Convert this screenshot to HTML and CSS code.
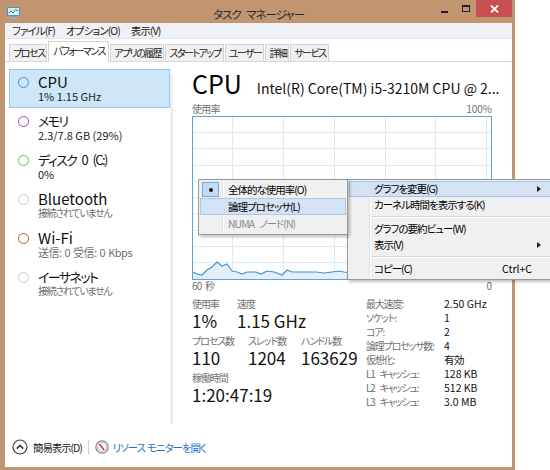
FILE: index.html
```html
<!DOCTYPE html>
<html lang="ja">
<head>
<meta charset="utf-8">
<title>タスク マネージャー</title>
<link rel="stylesheet" href="styles.css">
</head>
<body>
<div class="window">
  <div class="titlebar">
    <div class="tb-left">
      <svg class="app-icon" width="13" height="12" viewBox="0 0 13 12">
        <rect x="0.5" y="0.5" width="12" height="8" fill="#d6ebf8" stroke="#5f8fb4"/>
        <polyline points="1.5,6 4,4 6,6 8.5,2.5 11.5,4" fill="none" stroke="#3c9a3c" stroke-width="1"/>
        <rect x="4" y="9" width="5" height="1.5" fill="#7a9cb8"/>
        <rect x="2.5" y="10.5" width="8" height="1.5" fill="#9cb5c9"/>
      </svg>
    </div>
    <div class="title">タスク マネージャー</div>
    <div class="controls">
      <span class="btn-min"></span>
      <span class="btn-max"></span>
      <span class="btn-close">
        <svg width="9" height="8" viewBox="0 0 9 8"><path d="M1 0.5 L8 7.5 M8 0.5 L1 7.5" stroke="#fff" stroke-width="1.8"/></svg>
      </span>
    </div>
  </div>
  <div class="client">
    <div class="menubar">
      <span>ファイル(F)</span>
      <span>オプション(O)</span>
      <span>表示(V)</span>
    </div>
    <div class="tabs">
      <span class="tab">プロセス</span>
      <span class="tab active">パフォーマンス</span>
      <span class="tab">アプリの履歴</span>
      <span class="tab">スタートアップ</span>
      <span class="tab">ユーザー</span>
      <span class="tab">詳細</span>
      <span class="tab">サービス</span>
    </div>
    <div class="panel">
      <div class="sidebar">
        <div class="res selected">
          <span class="ring ring-cpu"></span>
          <div class="res-text"><div class="res-name">CPU</div><div class="res-sub">1% 1.15 GHz</div></div>
        </div>
        <div class="res">
          <span class="ring ring-mem"></span>
          <div class="res-text"><div class="res-name ja">メモリ</div><div class="res-sub">2.3/7.8 GB (29%)</div></div>
        </div>
        <div class="res">
          <span class="ring ring-disk"></span>
          <div class="res-text"><div class="res-name ja">ディスク 0 (C:)</div><div class="res-sub">0%</div></div>
        </div>
        <div class="res">
          <span class="ring ring-off"></span>
          <div class="res-text"><div class="res-name">Bluetooth</div><div class="res-sub muted ja">接続されていません</div></div>
        </div>
        <div class="res">
          <span class="ring ring-wifi"></span>
          <div class="res-text"><div class="res-name">Wi-Fi</div><div class="res-sub muted mixed">送信: 0 受信: 0 Kbps</div></div>
        </div>
        <div class="res">
          <span class="ring ring-off"></span>
          <div class="res-text"><div class="res-name ja">イーサネット</div><div class="res-sub muted ja">接続されていません</div></div>
        </div>
      </div>
      <div class="divider"></div>
      <div class="main">
        <div class="head">
          <span class="head-title">CPU</span>
          <span class="head-model">Intel(R) Core(TM) i5-3210M CPU @ 2...</span>
        </div>
        <div class="axis-top"><span class="ja-s">使用率</span><span>100%</span></div>
        <svg class="graph" width="300" height="164" viewBox="0 0 300 164">
          <rect x="0" y="0" width="300" height="164" fill="#fff"/>
          <g stroke="#dbeaf6" stroke-width="1">
            <line x1="1" y1="16.5" x2="299" y2="16.5"/>
            <line x1="1" y1="32.5" x2="299" y2="32.5"/>
            <line x1="1" y1="49.5" x2="299" y2="49.5"/>
            <line x1="1" y1="65.5" x2="299" y2="65.5"/>
            <line x1="1" y1="81.5" x2="299" y2="81.5"/>
            <line x1="1" y1="97.5" x2="299" y2="97.5"/>
            <line x1="1" y1="114.5" x2="299" y2="114.5"/>
            <line x1="1" y1="130.5" x2="299" y2="130.5"/>
            <line x1="1" y1="146.5" x2="299" y2="146.5"/>
            <line x1="40.5" y1="1" x2="40.5" y2="163"/>
            <line x1="91.5" y1="1" x2="91.5" y2="163"/>
            <line x1="142.5" y1="1" x2="142.5" y2="163"/>
            <line x1="193.5" y1="1" x2="193.5" y2="163"/>
            <line x1="243.5" y1="1" x2="243.5" y2="163"/>
            <line x1="294.5" y1="1" x2="294.5" y2="163"/>
          </g>
          <polygon fill="#e3eff9" points="1,156 5,158 10,159 15,154 20,151 25,146 30,150 35,148 40,155 45,156 50,158 55,156 64,156 69,158 75,155 82,156 90,159 95,154 100,156 110,156 117,156 124,156 132,157 140,156 147,155 152,156 160,157 170,156 180,158 190,156 200,157 210,155 220,157 230,156 240,158 250,156 260,157 270,155 280,157 290,156 299,157 299,163 1,163"/>
          <polyline fill="none" stroke="#3d95d2" stroke-width="1.2" points="1,156 5,158 10,159 15,154 20,151 25,146 30,150 35,148 40,155 45,156 50,158 55,156 64,156 69,158 75,155 82,156 90,159 95,154 100,156 110,156 117,156 124,156 132,157 140,156 147,155 152,156 160,157 170,156 180,158 190,156 200,157 210,155 220,157 230,156 240,158 250,156 260,157 270,155 280,157 290,156 299,157"/>
          <rect x="0.5" y="0.5" width="299" height="163" fill="none" stroke="#5ea2d6"/>
        </svg>
        <div class="axis-bottom"><span class="ja-s">60 秒</span><span>0</span></div>
        <div class="stats">
          <div class="stats-left">
            <div class="stat-group">
              <div class="stat w45"><div class="stat-label">使用率</div><div class="stat-value">1%</div></div>
              <div class="stat"><div class="stat-label">速度</div><div class="stat-value">1.15 GHz</div></div>
            </div>
            <div class="stat-group">
              <div class="stat w56"><div class="stat-label">プロセス数</div><div class="stat-value">110</div></div>
              <div class="stat w53"><div class="stat-label">スレッド数</div><div class="stat-value">1204</div></div>
              <div class="stat"><div class="stat-label">ハンドル数</div><div class="stat-value">163629</div></div>
            </div>
            <div class="stat-group">
              <div class="stat"><div class="stat-label">稼働時間</div><div class="stat-value">1:20:47:19</div></div>
            </div>
          </div>
          <div class="stats-right">
            <span class="k">最大速度:</span><span class="v">2.50 GHz</span>
            <span class="k">ソケット:</span><span class="v">1</span>
            <span class="k">コア:</span><span class="v">2</span>
            <span class="k">論理プロセッサ数:</span><span class="v">4</span>
            <span class="k">仮想化:</span><span class="v ja-v">有効</span>
            <span class="k">L1 キャッシュ:</span><span class="v">128 KB</span>
            <span class="k">L2 キャッシュ:</span><span class="v">512 KB</span>
            <span class="k">L3 キャッシュ:</span><span class="v">3.0 MB</span>
          </div>
        </div>
      </div>
    </div>
    <div class="footer">
      <svg class="fold-icon" width="16" height="16" viewBox="0 0 16 16">
        <circle cx="8" cy="8" r="7" fill="#fff" stroke="#444" stroke-width="1.2"/>
        <path d="M4.8 9.6 L8 6.4 L11.2 9.6" fill="none" stroke="#333" stroke-width="1.6"/>
      </svg>
      <span class="fold-text">簡易表示(D)</span>
      <span class="foot-sep"></span>
      <svg class="resmon-icon" width="14" height="14" viewBox="0 0 14 14">
        <circle cx="7" cy="7" r="6.2" fill="#e9e9e9" stroke="#8a8a8a" stroke-width="1.2"/>
        <circle cx="7" cy="7" r="4.2" fill="#fff" stroke="#b8b8b8" stroke-width="0.8"/>
        <path d="M4.5 4 L9 10" stroke="#d23a2a" stroke-width="1.6"/>
      </svg>
      <span class="resmon-link">リソース モニターを開く</span>
    </div>
  </div>
</div>

<div class="menu submenu">
  <div class="mi checked"><span class="check"><span class="bullet"></span></span><span class="mi-text">全体的な使用率(O)</span></div>
  <div class="mi hl"><span class="check"></span><span class="mi-text">論理プロセッサ(L)</span></div>
  <div class="mi disabled"><span class="check"></span><span class="mi-text">NUMA ノード(N)</span></div>
</div>

<div class="menu mainmenu">
  <div class="mi hl"><span class="mi-text">グラフを変更(G)</span><span class="arrow"></span></div>
  <div class="mi"><span class="mi-text">カーネル時間を表示する(K)</span></div>
  <div class="msep"></div>
  <div class="mi"><span class="mi-text">グラフの要約ビュー(W)</span></div>
  <div class="mi"><span class="mi-text">表示(V)</span><span class="arrow"></span></div>
  <div class="msep"></div>
  <div class="mi"><span class="mi-text">コピー(C)</span><span class="shortcut">Ctrl+C</span></div>
</div>
</body>
</html>
```

FILE: styles.css
```css
html, body {
  margin: 0;
  padding: 0;
  overflow: hidden;
  background: #ffffff;
}

body {
  width: 550px;
  height: 470px;
  position: relative;
  font-family: "Noto Sans CJK JP", "Noto Sans", sans-serif;
  font-feature-settings: "palt";
  color: #000;
}

.window {
  width: 515px;
  height: 470px;
  box-sizing: border-box;
  background: #c1956f;
  padding: 0 3px 3px 5px;
  display: flex;
  flex-direction: column;
}

/* title bar */
.titlebar {
  height: 23px;
  flex: none;
  display: grid;
  grid-template-columns: 1fr auto 1fr;
}

.tb-left {
  display: flex;
  align-items: flex-start;
}

.app-icon {
  margin: 7px 0 0 2px;
  display: block;
}

.title {
  font-size: 11.5px;
  line-height: 16px;
  padding-top: 6px;
  color: #2a2a2a;
  letter-spacing: -1px;
  word-spacing: 4px;
}

.controls {
  justify-self: end;
  display: flex;
  align-items: flex-start;
}

.btn-min {
  width: 7px;
  height: 2px;
  background: #222;
  margin-top: 11px;
}

.btn-max {
  width: 6px;
  height: 4px;
  border: 1px solid #222;
  border-top-width: 2px;
  margin: 5px 0 0 14px;
}

.btn-close {
  width: 36px;
  height: 17px;
  margin-left: 6px;
  background: #c84f4f;
  display: flex;
  align-items: center;
  justify-content: center;
}

.btn-close svg {
  display: block;
}

/* client area */
.client {
  flex: 1;
  background: #ffffff;
  display: flex;
  flex-direction: column;
  min-height: 0;
}

.menubar {
  height: 15px;
  flex: none;
  background: #eef2f7;
  border-bottom: 1px solid #dfe4ea;
  display: flex;
  gap: 11px;
  padding-left: 7px;
  font-size: 10.5px;
  line-height: 16px;
  letter-spacing: -0.9px;
  color: #1a1a1a;
}

.tabs {
  flex: none;
  height: 22px;
  display: flex;
  align-items: flex-end;
  padding-left: 4px;
  border-bottom: 1px solid #d9d9d9;
}

.tab {
  height: 17px;
  box-sizing: border-box;
  padding: 0 2px 0 3px;
  margin-right: 1px;
  background: #f0f0f0;
  border: 1px solid #d2d2d2;
  border-bottom: none;
  font-size: 10px;
  line-height: 16px;
  color: #1a1a1a;
  letter-spacing: -1.5px;
}

.tab.active {
  height: 21px;
  background: #ffffff;
  margin-bottom: -1px;
  line-height: 18px;
  padding: 0 3px 0 4px;
}

/* panel */
.panel {
  flex: 1;
  display: flex;
  min-height: 0;
}

.sidebar {
  width: 165px;
  flex: none;
  padding: 7px 0 0 4px;
  box-sizing: border-box;
}

.res {
  width: 161px;
  height: 39px;
  box-sizing: border-box;
  border: 1px solid transparent;
  display: flex;
  padding-left: 8px;
}

.res.selected {
  background: #cde7f8;
  border-color: #92c7ec;
}

.ring {
  width: 11px;
  height: 11px;
  box-sizing: border-box;
  border-radius: 50%;
  border: 1.5px solid #ccc;
  background: #fff;
  margin-top: 7px;
  flex: none;
}

.res.selected .ring {
  background: transparent;
}

.ring-cpu { border-color: #3f93cf; }
.ring-mem { border-color: #a743c6; }
.ring-disk { border-color: #6cbf35; }
.ring-off { border-color: #c9c9c9; }
.ring-wifi { border-color: #a6652a; }

.res-text {
  margin-left: 9px;
  padding-top: 5px;
}

.res-name {
  font-size: 15px;
  line-height: 14px;
  color: #111;
}

.res-name.ja {
  font-size: 13px;
  letter-spacing: -1.6px;
  word-spacing: 4px;
}

.res-sub {
  font-size: 11px;
  line-height: 12px;
  color: #222;
  margin-top: 1px;
}

.res-sub.ja {
  font-size: 10px;
  letter-spacing: -1.3px;
}

.res-sub.mixed {
  letter-spacing: -0.5px;
  word-spacing: 1px;
}

.res-sub.muted {
  color: #707070;
}

.divider {
  width: 3px;
  flex: none;
  background: #ededed;
  margin: 13px 0 8px 0;
}

.main {
  width: 300px;
  padding: 6px 20px 0 19px;
  flex: none;
}

.head {
  display: flex;
  align-items: baseline;
  height: 30px;
  line-height: 30px;
  white-space: nowrap;
}

.head-title {
  font-size: 25px;
  color: #000;
}

.head-model {
  font-size: 14px;
  margin-left: 15px;
  color: #111;
}

.axis-top, .axis-bottom {
  display: flex;
  justify-content: space-between;
  font-size: 10px;
  line-height: 12px;
  color: #707070;
}

.ja-s {
  letter-spacing: -0.8px;
  word-spacing: 2px;
}

.axis-top {
  margin-top: 5px;
}

.graph {
  display: block;
  margin-top: 1px;
}

.stats {
  display: flex;
  margin-top: 5px;
}

.stats-left {
  width: 174px;
  flex: none;
}

.stat-group {
  display: flex;
  margin-bottom: 3px;
}

.w45 { width: 45px; }
.w56 { width: 56px; }
.w53 { width: 53px; }

.stat-label {
  font-size: 10px;
  line-height: 14px;
  color: #6f6f6f;
  letter-spacing: -1.1px;
  white-space: nowrap;
}

.stat-value {
  font-size: 17px;
  line-height: 20px;
  color: #111;
  white-space: nowrap;
}

.stats-right {
  display: grid;
  grid-template-columns: 78px auto;
  font-size: 10.5px;
  line-height: 14px;
}

.stats-right .k {
  color: #6f6f6f;
  white-space: nowrap;
  font-size: 10px;
  letter-spacing: -1.2px;
  word-spacing: 4px;
}

.stats-right .v {
  color: #111;
  white-space: nowrap;
}

.stats-right .ja-v {
  letter-spacing: -0.6px;
}

/* footer */
.footer {
  height: 30px;
  flex: none;
  display: flex;
  align-items: center;
  padding: 0 0 5px 7px;
  font-size: 10.5px;
  letter-spacing: -1.1px;
  word-spacing: 1px;
}

.fold-icon {
  display: block;
}

.fold-text {
  margin-left: 5px;
  color: #1a1a1a;
}

.foot-sep {
  width: 1px;
  height: 15px;
  background: #d4d4d4;
  margin: 0 6px 0 6px;
}

.resmon-icon {
  display: block;
}

.resmon-link {
  margin-left: 4px;
  color: #1f6fc7;
}

/* context menus */
.menu {
  position: absolute;
  top: 179px;
  background: #f0f0f0;
  border: 1px solid #979797;
  box-sizing: border-box;
  box-shadow: 2px 2px 3px rgba(0, 0, 0, 0.25);
  font-size: 10.5px;
  letter-spacing: -1px;
  word-spacing: 4px;
  color: #000;
  padding: 1px 1px 2px 1px;
}

.submenu {
  left: 198px;
  width: 150px;
  z-index: 3;
  background-image: linear-gradient(to right, transparent 23px, #e2e2e2 23px, #e2e2e2 24px, #ffffff 24px, #ffffff 25px, transparent 25px);
}

.mainmenu {
  left: 347px;
  width: 210px;
  z-index: 2;
  background-image: linear-gradient(to right, transparent 21px, #e2e2e2 21px, #e2e2e2 22px, #ffffff 22px, #ffffff 23px, transparent 23px);
}

.mi {
  height: 16px;
  display: flex;
  align-items: center;
  box-sizing: border-box;
  border: 1px solid transparent;
  position: relative;
  white-space: nowrap;
}

.submenu .mi {
  height: 17px;
}

.mi.hl {
  background: #d3e3f3;
  border-color: #a9c8e9;
}

.mi-text {
  line-height: 14px;
}

.mainmenu .mi-text {
  margin-left: 24px;
}

.check {
  width: 17px;
  height: 15px;
  flex: none;
  margin-left: 1px;
  box-sizing: border-box;
  display: flex;
  align-items: center;
  justify-content: center;
}

.mi.checked .check {
  background: #c4dcf3;
  border: 1px solid #76a9dc;
}

.bullet {
  width: 4px;
  height: 4px;
  border-radius: 50%;
  background: #111;
}

.submenu .mi-text {
  margin-left: 9px;
}

.mi.disabled {
  color: #8c8c8c;
}

.arrow {
  position: absolute;
  right: 13px;
  top: 4px;
  width: 0;
  height: 0;
  border-top: 3px solid transparent;
  border-bottom: 3px solid transparent;
  border-left: 4px solid #222;
}

.shortcut {
  position: absolute;
  right: 22px;
  line-height: 14px;
  letter-spacing: 0;
}

.msep {
  height: 8px;
  margin-left: 23px;
  background: linear-gradient(to bottom, transparent 3px, #d7d7d7 3px, #d7d7d7 4px, #ffffff 4px, #ffffff 5px, transparent 5px);
}
```
